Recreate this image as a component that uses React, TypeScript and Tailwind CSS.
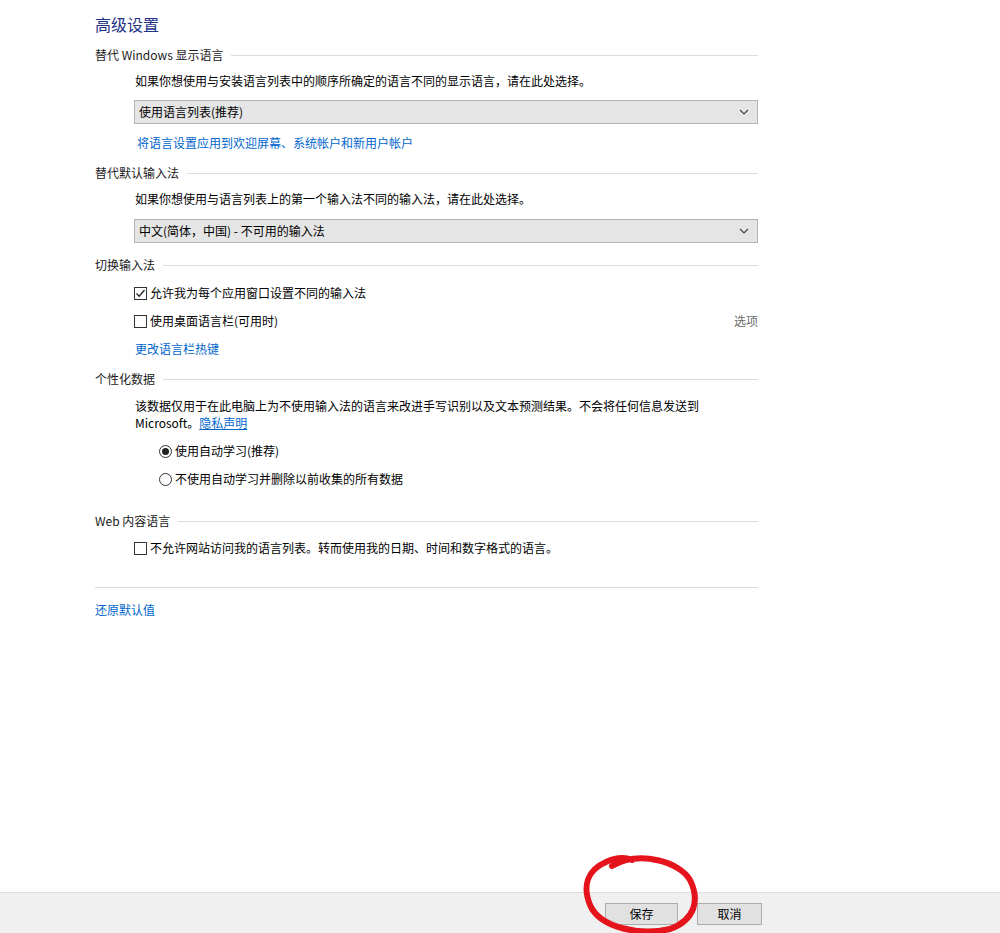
import React from 'react';

const font = { fontFamily: '"Noto Sans CJK SC", "Noto Sans", sans-serif' };

const Heading: React.FC<{ title: string; className?: string }> = ({ title, className }) => (
  <div className={`flex items-center h-5 ${className ?? ''}`}>
    <span className="text-[12px] text-[#1a1a1a] whitespace-nowrap">{title}</span>
    <div className="flex-1 h-px bg-[#dcdcdc] ml-2" />
  </div>
);

const Select: React.FC<{ value: string; className?: string }> = ({ value, className }) => (
  <div className={`ml-[39px] h-6 flex items-center justify-between bg-[#e5e5e5] border border-[#b4b4b4] px-1 ${className ?? ''}`}>
    <span className="text-[12px] text-black">{value}</span>
    <svg width="10" height="6" viewBox="0 0 10 6" className="mr-1">
      <path d="M1 1 L5 5 L9 1" fill="none" stroke="#444" strokeWidth="1.2" />
    </svg>
  </div>
);

const Checkbox: React.FC<{ checked?: boolean }> = ({ checked }) => (
  <span className="w-[13px] h-[13px] border border-[#333] bg-white flex items-center justify-center mr-[3px] shrink-0">
    {checked && (
      <svg width="11" height="11" viewBox="0 0 11 11">
        <path d="M1.5 5.5 L4.2 8.2 L9.5 2" fill="none" stroke="#222" strokeWidth="1.3" />
      </svg>
    )}
  </span>
);

const Radio: React.FC<{ checked?: boolean }> = ({ checked }) => (
  <span className="w-[13px] h-[13px] rounded-full border border-[#333] bg-white flex items-center justify-center mr-[3px] shrink-0">
    {checked && <span className="w-[7px] h-[7px] rounded-full bg-[#222]" />}
  </span>
);

const App: React.FC = () => {
  return (
    <div className="relative min-h-[933px] flex flex-col bg-white text-black" style={font}>
      <div className="flex-1 pl-[95px] pr-[242px] pt-3">
        <h2 className="text-[16px] leading-6 text-[#1e3287]">高级设置</h2>

        <Heading title="替代 Windows 显示语言" className="mt-[9px]" />
        <p className="ml-10 mt-[6px] h-5 leading-5 text-[12px]">如果你想使用与安装语言列表中的顺序所确定的语言不同的显示语言，请在此处选择。</p>
        <Select value="使用语言列表(推荐)" className="mt-[9px]" />
        <div className="ml-[42px] mt-[9px] h-5 leading-5 text-[12px] text-[#0066cc]">将语言设置应用到欢迎屏幕、系统帐户和新用户帐户</div>

        <Heading title="替代默认输入法" className="mt-[10px]" />
        <p className="ml-10 mt-[6px] h-5 leading-5 text-[12px]">如果你想使用与语言列表上的第一个输入法不同的输入法，请在此处选择。</p>
        <Select value="中文(简体，中国) - 不可用的输入法" className="mt-[10px]" />

        <Heading title="切换输入法" className="mt-[12px]" />
        <label className="ml-[39px] mt-[8px] h-5 flex items-center text-[12px]">
          <Checkbox checked />
          允许我为每个应用窗口设置不同的输入法
        </label>
        <div className="ml-[39px] mt-[8px] h-5 flex items-center justify-between text-[12px]">
          <span className="flex items-center">
            <Checkbox />
            使用桌面语言栏(可用时)
          </span>
          <span className="text-[#6d6d6d]">选项</span>
        </div>
        <div className="ml-10 mt-[8px] h-5 leading-5 text-[12px] text-[#0066cc]">更改语言栏热键</div>

        <Heading title="个性化数据" className="mt-[10px]" />
        <p className="ml-10 mt-[8px] leading-[17px] text-[12px] pr-4">
          该数据仅用于在此电脑上为不使用输入法的语言来改进手写识别以及文本预测结果。不会将任何信息发送到
          <br />
          Microsoft。<span className="text-[#0066cc] underline">隐私声明</span>
        </p>
        <label className="ml-16 mt-[10px] h-5 flex items-center text-[12px]">
          <Radio checked />
          使用自动学习(推荐)
        </label>
        <label className="ml-16 mt-[8px] h-5 flex items-center text-[12px]">
          <Radio />
          不使用自动学习并删除以前收集的所有数据
        </label>

        <Heading title="Web 内容语言" className="mt-[22px]" />
        <label className="ml-[39px] mt-[7px] h-5 flex items-center text-[12px]">
          <Checkbox />
          不允许网站访问我的语言列表。转而使用我的日期、时间和数字格式的语言。
        </label>

        <div className="mt-[29px] h-px bg-[#dcdcdc]" />
        <div className="mt-[12px] h-5 leading-5 text-[12px] text-[#0066cc]">还原默认值</div>
      </div>

      <div className="h-[41px] bg-[#f0f0f0] border-t border-[#dfdfdf] flex items-start pt-[10px] pl-[605px] gap-[19px]">
        <button className="w-[73px] h-[22px] bg-[#e1e1e1] border border-[#adadad] text-[12px] text-black">保存</button>
        <button className="w-[65px] h-[22px] bg-[#e1e1e1] border border-[#adadad] text-[12px] text-black">取消</button>
      </div>

      <svg className="absolute left-0 top-0 pointer-events-none" width="1000" height="933" viewBox="0 0 1000 933">
        <path
          d="M612 866 C 640 850, 680 862, 690 880 C 700 900, 695 920, 670 929 C 640 936, 600 928, 590 905 C 582 885, 588 870, 606 862 C 615 858, 625 857, 632 860"
          fill="none"
          stroke="#e5141c"
          strokeWidth="6"
          strokeLinecap="round"
        />
      </svg>
    </div>
  );
};

export default App;
